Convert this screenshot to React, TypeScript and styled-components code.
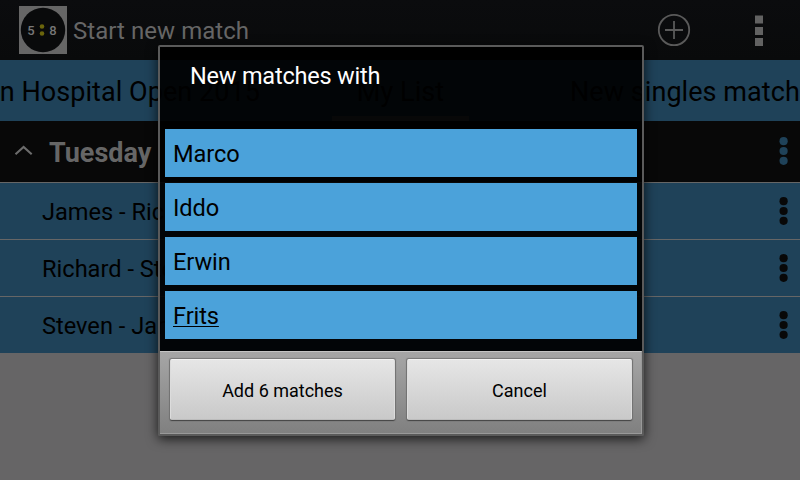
import React from "react";
import styled, { createGlobalStyle } from "styled-components";

const GlobalStyle = createGlobalStyle`
  * { box-sizing: border-box; }
  html, body { margin: 0; padding: 0; overflow: hidden; background: #666; }
  body { font-family: Roboto, "Liberation Sans", sans-serif; color: #000; }
`;

const Screen = styled.div`
  position: relative;
  width: 800px;
  height: 480px;
  overflow: hidden;
  background: #666566;
`;

const ActionBar = styled.header`
  display: flex;
  align-items: center;
  height: 60px;
  padding: 0 36px 0 19px;
  background: linear-gradient(#0b0c0e, #090a0b);
`;

const ActionTitle = styled.h1`
  flex: 1;
  margin: 1px 0 0 6px;
  font-size: 24px;
  font-weight: 400;
  line-height: 32px;
  letter-spacing: 0.05px;
  color: #666;
`;

const ActionIcon = styled.svg`
  display: block;
`;

const TabStrip = styled.nav`
  display: flex;
  height: 61px;
  background: #1f4259;
`;

const Tab = styled.div<{ $width: number; $align: string; $current?: boolean }>`
  display: flex;
  flex: none;
  justify-content: ${(p) => p.$align};
  width: ${(p) => p.$width}px;
  height: 61px;
  overflow: hidden;
  border-bottom: 5px solid ${(p) => (p.$current ? "#666" : "transparent")};
  font-size: 27px;
  line-height: 64px;
  letter-spacing: 0.06px;
  white-space: nowrap;
`;

const TabGap = styled.div<{ $width: number }>`
  flex: none;
  width: ${(p) => p.$width}px;
`;

const GroupHeader = styled.div`
  display: flex;
  align-items: center;
  height: 61px;
  padding: 0 12px 1px 14px;
  background: #080808;
`;

const GroupTitle = styled.h2`
  flex: 1;
  margin: 4px 0 0 15px;
  font-size: 27px;
  font-weight: 700;
  line-height: 36px;
  color: #666;
`;

const MatchRow = styled.div`
  display: flex;
  align-items: center;
  justify-content: space-between;
  height: 57px;
  padding: 0 12px 0 42px;
  border-top: 1px solid #666;
  background: #1f4259;
  font-size: 23.6px;
  line-height: 30px;
`;

const MatchName = styled.span`
  padding-top: 2px;
`;

const Dialog = styled.section`
  position: absolute;
  left: 158px;
  top: 45px;
  width: 486px;
  height: 391px;
  display: flex;
  flex-direction: column;
  border: 2px solid #5a5a5a;
  border-radius: 2px;
  background: rgba(0, 0, 0, 0.92);
  background-clip: padding-box;
  box-shadow: 0 3px 12px rgba(0, 0, 0, 0.75);
`;

const DialogTitle = styled.h2`
  height: 82px;
  margin: 0;
  padding: 11px 0 0 30px;
  font-size: 23.5px;
  font-weight: 400;
  line-height: 37px;
  letter-spacing: -0.2px;
  color: #fff;
`;

const PlayerList = styled.div`
  display: flex;
  flex: 1;
  flex-direction: column;
  gap: 6px;
  padding: 0 5px;
`;

const Player = styled.div<{ $editing?: boolean }>`
  height: 48px;
  padding: 1px 8px 0;
  background: #4ba2da;
  font-size: 23.6px;
  line-height: 49px;
  letter-spacing: -0.1px;
  text-decoration: ${(p) => (p.$editing ? "underline" : "none")};
  text-decoration-thickness: 1px;
  text-underline-offset: 2px;
`;

const ButtonBar = styled.footer`
  display: flex;
  gap: 12px;
  height: 83px;
  padding: 7px 9px 13px 10px;
  border: 1px solid #999;
  border-width: 1px 1px 1px 0;
  border-top-color: #c4c4c4;
  background: linear-gradient(#a6a6a6, #808080);
`;

const DialogButton = styled.button`
  flex: 1;
  margin: 0;
  padding: 2px 0 0;
  border: 1px solid;
  border-color: #f3f3f3 #dcdcdc #bcbcbc;
  border-radius: 2px;
  background: linear-gradient(#e6e6e6, #c9c9c9);
  box-shadow: 0 1px 1px #444, 0 0 1px 0.5px #777;
  font-family: inherit;
  font-size: 18px;
  color: #000;
`;

const tabs = {
  previous: "n Hospital Open 2015",
  current: "My List",
  next: "New singles match",
};
const matches = ["James - Richard", "Richard - Steven", "Steven - James"];
const players = ["Marco", "Iddo", "Erwin", "Frits"];

function AppLogo() {
  return (
    <ActionIcon width="48" height="48" viewBox="0 0 48 48">
      <rect width="48" height="48" fill="#666" />
      <circle cx="24" cy="24" r="22.2" fill="#090a0b" />
      <g fill="#777" fontFamily="Roboto, sans-serif" fontSize="13" fontWeight="500" textAnchor="middle">
        <text x="12" y="28.6">5</text>
        <text x="34" y="28.6">8</text>
      </g>
      <circle cx="23" cy="20.5" r="2.3" fill="#6a650c" />
      <circle cx="23" cy="27.5" r="2.3" fill="#6a650c" />
    </ActionIcon>
  );
}

function Dots({ color }: { color: string }) {
  return (
    <ActionIcon width="10" height="30" viewBox="0 0 10 30">
      {[5.2, 15, 24.8].map((y) => (
        <circle key={y} cx="5.6" cy={y} r="4.1" fill={color} />
      ))}
    </ActionIcon>
  );
}

export default function App() {
  return (
    <>
      <GlobalStyle />
      <Screen>
        <ActionBar>
          <AppLogo />
          <ActionTitle>Start new match</ActionTitle>
          <ActionIcon width="34" height="34" viewBox="0 0 34 34" fill="none" stroke="#5a5a5a">
            <circle cx="17" cy="17" r="15.2" strokeWidth="1.8" />
            <path d="M8 17h18M17 8v18" strokeWidth="1.8" />
          </ActionIcon>
          <TabGap $width={63} />
          <ActionIcon width="10" height="32" viewBox="0 0 10 32" fill="#626262">
            <path d="M1 1.5h8v8H1zM1 13h8v8H1zM1 24h8v8H1z" />
          </ActionIcon>
        </ActionBar>
        <TabStrip>
          <Tab $width={260} $align="flex-end">{tabs.previous}</Tab>
          <TabGap $width={72} />
          <Tab $width={137} $align="center" $current>{tabs.current}</Tab>
          <TabGap $width={101} />
          <Tab $width={230} $align="flex-start">{tabs.next}</Tab>
        </TabStrip>
        <GroupHeader>
          <ActionIcon width="20" height="12" viewBox="0 0 20 12" fill="none" stroke="#6c6c6c" strokeWidth="2.1">
            <path d="M1.5 9.2 9.6 1.9l8.1 7.3" />
          </ActionIcon>
          <GroupTitle>Tuesday</GroupTitle>
          <Dots color="#1f4259" />
        </GroupHeader>
        {matches.map((match) => (
          <MatchRow key={match}>
            <MatchName>{match}</MatchName>
            <Dots color="#080808" />
          </MatchRow>
        ))}
        <Dialog>
          <DialogTitle>New matches with</DialogTitle>
          <PlayerList>
            {players.map((name, i) => (
              <Player key={name} $editing={i === 3}>{name}</Player>
            ))}
          </PlayerList>
          <ButtonBar>
            <DialogButton>Add 6 matches</DialogButton>
            <DialogButton>Cancel</DialogButton>
          </ButtonBar>
        </Dialog>
      </Screen>
    </>
  );
}
